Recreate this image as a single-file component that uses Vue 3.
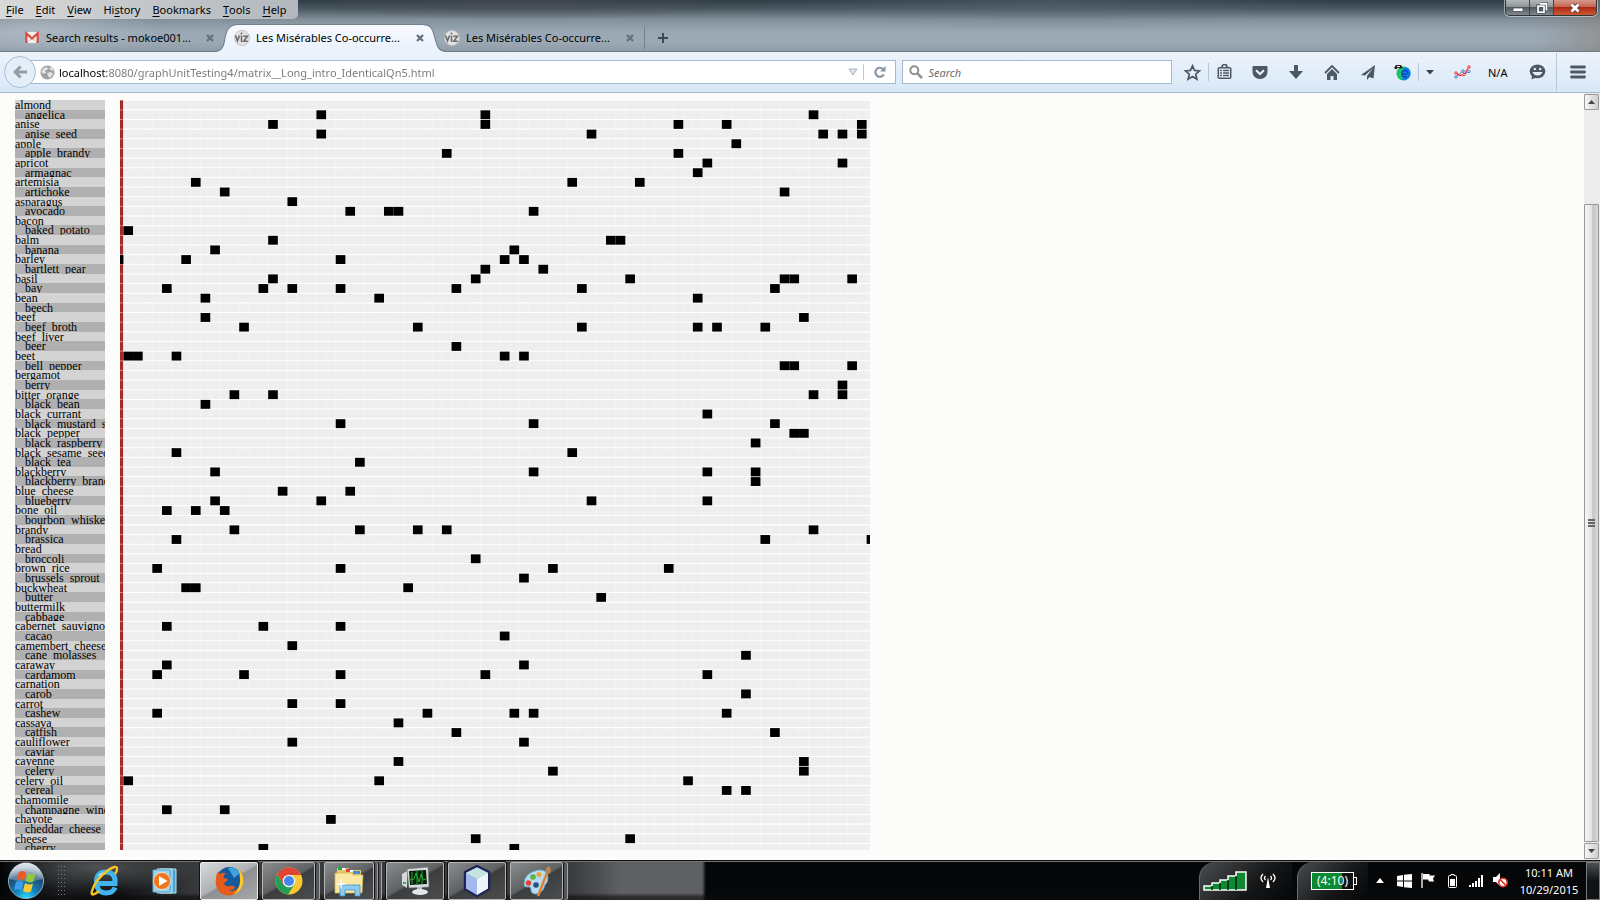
<script setup>
const menus = ['File', 'Edit', 'View', 'History', 'Bookmarks', 'Tools', 'Help'].map((name) => {
  const at = name === 'History' ? 2 : 0
  return { name, before: name.slice(0, at), key: name[at], after: name.slice(at + 1) }
})

const tabs = [
  { id: 1, title: 'Search results - mokoe001...', icon: 'mail', active: false },
  { id: 2, title: 'Les Misérables Co-occurre...', icon: 'viz', active: true },
  { id: 3, title: 'Les Misérables Co-occurre...', icon: 'viz', active: false },
]

const labels = (
  'almond angelica anise anise_seed apple apple_brandy apricot armagnac artemisia artichoke asparagus avocado ' +
  'bacon baked_potato balm banana barley bartlett_pear basil bay bean beech beef beef_broth beef_liver beer beet ' +
  'bell_pepper bergamot berry bitter_orange black_bean black_currant black_mustard_seed_oil black_pepper ' +
  'black_raspberry black_sesame_seed black_tea blackberry blackberry_brandy blue_cheese blueberry bone_oil ' +
  'bourbon_whiskey brandy brassica bread broccoli brown_rice brussels_sprout buckwheat butter buttermilk cabbage ' +
  'cabernet_sauvignon_wine cacao camembert_cheese cane_molasses caraway cardamom carnation carob carrot cashew ' +
  'cassava catfish cauliflower caviar cayenne celery celery_oil cereal chamomile champagne_wine chayote ' +
  'cheddar_cheese cheese cherry'
).split(' ')

const links = {
  1: [20, 37, 71], 2: [15, 37, 57, 62, 76], 3: [20, 48, 72, 74, 76], 4: [63], 5: [33, 57], 6: [60, 74], 7: [59],
  8: [7, 46, 53], 9: [10, 68], 10: [17], 11: [23, 27, 28, 42], 13: [0], 14: [15, 50, 51], 15: [9, 40],
  16: [-1, 6, 22, 39, 41], 17: [37, 43], 18: [15, 36, 52, 68, 69, 75], 19: [4, 14, 17, 22, 34, 47, 67],
  20: [8, 26, 59], 22: [8, 70], 23: [12, 30, 47, 59, 61, 66], 25: [34], 26: [0, 1, 5, 39, 41], 27: [68, 69, 75],
  29: [74], 30: [11, 15, 71, 74], 31: [8], 32: [60], 33: [22, 42, 67], 34: [69, 70], 35: [65], 36: [5, 46],
  37: [24], 38: [9, 42, 60, 65], 39: [65], 40: [16, 23], 41: [9, 20, 48, 60], 42: [4, 7, 10],
  44: [11, 24, 30, 33, 71], 45: [5, 66, 77], 47: [36], 48: [3, 22, 44, 56], 49: [41], 50: [6, 7, 29], 51: [49],
  54: [4, 14, 22], 55: [39], 56: [17], 57: [64], 58: [4, 41], 59: [3, 12, 22, 37, 60], 61: [64], 62: [17, 22],
  63: [3, 31, 40, 42, 62], 64: [28], 65: [34, 67], 66: [17, 41], 68: [28, 70], 69: [44, 70], 70: [0, 26, 58],
  71: [62, 64], 73: [4, 10], 74: [21], 76: [36, 52], 77: [14, 40],
}
const cells = Object.entries(links).flatMap(([row, cols]) => cols.map((col) => ({ row: Number(row), col: col + 1 })))
const lines = Array.from({ length: 79 }, (_, i) => i)
const dots = Array.from({ length: 24 }, (_, i) => ({ x: 1 + (i % 3) * 3, y: 1 + Math.floor(i / 3) * 4 }))
</script>

<template>
  <div class="screen">
    <header class="frame">
      <div class="title-row">
        <nav class="menu" aria-label="Menu bar">
          <button v-for="m in menus" :key="m.name" type="button">{{ m.before }}<u>{{ m.key }}</u>{{ m.after }}</button>
        </nav>
        <div class="window-buttons">
          <button type="button" class="min" aria-label="Minimize">
            <svg width="12" height="12" viewBox="0 0 12 12"><rect x="1" y="6" width="10" height="3.500" rx=".5" fill="#fff" stroke="#444b57" stroke-width=".8" /></svg>
          </button>
          <button type="button" class="max" aria-label="Restore">
            <svg width="12" height="12" viewBox="0 0 12 12"><g fill="none" stroke="#444b57" stroke-width="3.200"><path d="M4.500 2h6v6" /><rect x="2" y="4" width="6" height="6" /></g><g fill="none" stroke="#fff" stroke-width="1.700"><path d="M4 1.800h6.500v6.500" /><rect x="2" y="4.200" width="6" height="6" /></g></svg>
          </button>
          <button type="button" class="close" aria-label="Close window">
            <svg width="14" height="12" viewBox="0 0 14 12"><path d="M3.500 2.500l7 7m0-7l-7 7" stroke="#4f3b45" stroke-width="4.500" /><path d="M3.500 2.500l7 7m0-7l-7 7" stroke="#fff" stroke-width="2.800" /></svg>
          </button>
        </div>
      </div>
      <div class="tab-row">
        <div v-for="t in tabs" :key="t.id" class="tab" :class="{ active: t.active }">
          <svg v-if="t.active" class="tab-shape" viewBox="0 0 230 28" preserveAspectRatio="none">
            <defs><linearGradient id="tabFill" x2="0" y2="1"><stop offset="0" stop-color="#f7faff" /><stop offset="1" stop-color="#e9f1fb" /></linearGradient></defs>
            <path d="M0 28C13 28 10 17 13 9 15 3 18 1 24 1H205c7 0 9 3 11 9 3 9 2 18 14 18z" fill="url(#tabFill)" />
            <path d="M0 27.500C13 27.500 10 17 13 9 15 3 18 .5 24 .5H205c7 0 9 3 11 9 3 9 2 18 14 18" fill="none" stroke="#6f7f90" />
          </svg>
          <button type="button" class="tab-title">
            <svg v-if="t.icon === 'mail'" width="15" height="15" viewBox="0 0 15 15">
              <rect x="1" y="2" width="13" height="11" fill="#f3f1f0" /><path d="M2 13l5.500-5 5.500 5" fill="none" stroke="#d0cdcb" /><path d="M1.800 13V3.200l5.700 5.300 5.700-5.300V13" fill="none" stroke="#d8483c" stroke-width="2.200" />
            </svg>
            <svg v-else width="16" height="16" viewBox="0 0 16 16">
              <circle cx="8" cy="8" r="7.500" fill="#e4e4e4" stroke="#c2c2c2" />
              <g fill="none" stroke="#6c6c6c" stroke-width="1.600"><path d="M1.500 5.500l2 5.500 2-5.500M7.500 5.500V12M9.200 6.300h4.200l-3.600 4.900h4" /></g><circle cx="7.500" cy="3.400" r="1" fill="#6c6c6c" />
            </svg>
            <span>{{ t.title }}</span>
          </button>
          <button type="button" class="tab-close" aria-label="Close tab">
            <svg width="8" height="8" viewBox="0 0 8 8"><path d="M1 1l6 6m0-6L1 7" stroke="#63717f" stroke-width="2.300" /></svg>
          </button>
        </div>
        <button type="button" class="new-tab" aria-label="New tab">
          <svg width="10" height="10" viewBox="0 0 10 10"><path d="M5 0v10M0 5h10" stroke="#3c4852" stroke-width="2" /></svg>
        </button>
      </div>
    </header>

    <div class="toolbar">
      <button type="button" class="back" aria-label="Back">
        <svg width="14" height="14" viewBox="0 0 14 14"><path d="M7.500 1.500L2.200 7l5.300 5.500M2.500 7H14" fill="none" stroke="#949ba3" stroke-width="3" /></svg>
      </button>
      <div class="url-box">
        <svg width="15" height="15" viewBox="0 0 15 15"><circle cx="7.500" cy="7.500" r="7" fill="#a0a0a0" /><path d="M1 7l3-4 3-1 1 2-3 2 1 2-2 1zM9 3l3-1 2 4-3-1zM7 8l4-1 2 2-3 4-2-2z" fill="#e4e4e4" /></svg>
        <input class="url" type="text" aria-label="Address" value="localhost:8080/graphUnitTesting4/matrix__Long_intro_IdenticalQn5.html" />
        <button type="button" class="drop" aria-label="Show history">
          <svg width="10" height="8" viewBox="0 0 10 8"><path d="M1 1h8L5 7z" fill="#dfe5ec" stroke="#a6b1bd" /></svg>
        </button>
        <button type="button" class="reload" aria-label="Reload">
          <svg width="12" height="12" viewBox="0 0 12 12"><path d="M9 3A4.500 4.500 0 1 0 9.800 8.500" fill="none" stroke="#8694a3" stroke-width="2.200" /><path d="M11.500 0v5.500H6z" fill="#8694a3" /></svg>
        </button>
      </div>
      <div class="search-box">
        <svg width="14" height="14" viewBox="0 0 14 14"><circle cx="5.300" cy="5.300" r="4" fill="none" stroke="#8f8f8f" stroke-width="2" /><path d="M8.300 8.300l4.700 4.700" stroke="#8f8f8f" stroke-width="2.600" /></svg>
        <input type="text" aria-label="Search" placeholder="Search" />
      </div>
      <div class="tools">
        <button type="button" class="t-star" aria-label="Bookmark this page"><svg width="17" height="17" viewBox="0 0 17 17"><path d="M8.500 1.800l2 4.600 5 .5-3.800 3.300 1.200 5-4.400-2.700-4.400 2.700 1.200-5L1.500 6.900l5-.5z" fill="none" stroke="#4c5864" stroke-width="1.700" /></svg></button>
        <i class="sep"></i>
        <button type="button" class="t-list" aria-label="Bookmarks"><svg width="15" height="16" viewBox="0 0 15 16"><path d="M5 3a2.500 2.500 0 0 1 5 0" fill="none" stroke="#4c5864" stroke-width="1.700" /><rect x="1.300" y="3.800" width="12.400" height="10.400" rx="1" fill="#eef4fb" stroke="#4c5864" stroke-width="1.600" /><path d="M3 6.500h2M6 6.500h6M3 9h2M6 9h6M3 11.500h2M6 11.500h6" stroke="#4c5864" stroke-width="1.400" /></svg></button>
        <button type="button" class="t-pocket" aria-label="Pocket"><svg width="16" height="15" viewBox="0 0 16 15"><path d="M1.500 1h13q1 0 1 1v5a7.500 7 0 0 1-15 0V2q0-1 1-1z" fill="#4c5864" /><path d="M4 5.200L8 9l4-3.800" fill="none" stroke="#eaf2fb" stroke-width="2" /></svg></button>
        <button type="button" class="t-down" aria-label="Downloads"><svg width="14" height="15" viewBox="0 0 14 15"><path d="M5 0h4v6h5l-7 8-7-8h5z" fill="#4c5864" /></svg></button>
        <button type="button" class="t-home" aria-label="Home"><svg width="16" height="15" viewBox="0 0 16 15"><path d="M1 8l7-7 7 7" fill="none" stroke="#4c5864" stroke-width="1.800" /><path d="M8 4l5 5v6H9.500v-4h-3v4H3V9z" fill="#4c5864" /></svg></button>
        <button type="button" class="t-send" aria-label="Share"><svg width="15" height="15" viewBox="0 0 15 15"><path d="M14 0L0 10l4 .5L12 3 6 11v4l2.500-3 4 1.500z" fill="#4c5864" /></svg></button>
        <button type="button" class="t-globe" aria-label="Proxy">
          <svg width="17" height="17" viewBox="0 0 17 17"><circle cx="9.500" cy="9.500" r="7" fill="#14c766" /><path d="M9 4q6-2 7.500 4 .5 6-5 8-4 1-3-3l6-1-5-1q-3-3 0-4 4-1 4 2l-2 1q0-1-1-1" fill="#1177ee" /><path d="M12.500 10.500H8.200q-1-4 2.300-4 4 0 3 3.500M8 11q1 3 5 1.500" fill="none" stroke="#0a3fbf" stroke-width="1.300" /><path d="M0 4l2-3h5l2 3-3 .500-2-1-2 2z" fill="#2b1a17" /><path d="M3 2.500h3" stroke="#fff" /></svg>
        </button>
        <i class="sep"></i>
        <button type="button" class="t-caret" aria-label="More"><svg width="8" height="5" viewBox="0 0 8 5"><path d="M0 0h8L4 4.500z" fill="#39424b" /></svg></button>
        <button type="button" class="t-graph" aria-label="Statistics"><svg width="17" height="14" viewBox="0 0 17 14"><path d="M2 12l7-6 1 3.500 5-3" fill="none" stroke="#4a78d0" /><path d="M2 8l4 2.500 4-1 5-7.500" fill="none" stroke="#ee2a2a" stroke-width="1.200" /><g fill="#fff"><circle cx="2" cy="8" r="1.200" stroke="#ee2a2a" /><circle cx="15" cy="2" r="1.200" stroke="#ee2a2a" /><circle cx="2" cy="12" r="1.200" stroke="#4a78d0" /><circle cx="9" cy="6" r="1.200" stroke="#4a78d0" /><circle cx="15" cy="6.500" r="1.200" stroke="#4a78d0" /><circle cx="10" cy="9.500" r="1.200" stroke="#ee2a2a" /></g></svg></button>
        <span class="na">N/A</span>
        <button type="button" class="t-chat" aria-label="Chat"><svg width="17" height="16" viewBox="0 0 17 16"><ellipse cx="8.500" cy="7.300" rx="7.800" ry="6.900" fill="#4c5864" /><path d="M3 11l-.5 4.500L8 13z" fill="#4c5864" /><circle cx="5.800" cy="5" r="1.200" fill="#e5effa" /><circle cx="11.200" cy="5" r="1.200" fill="#e5effa" /><path d="M3.500 8h10q-1.500 3.500-5 3.500T3.500 8z" fill="#e5effa" /></svg></button>
        <i class="sep tall"></i>
        <button type="button" class="t-menu" aria-label="Open menu"><svg width="16" height="14" viewBox="0 0 16 14"><path d="M1.500 2h13M1.500 7h13M1.500 12h13" stroke="#4c5864" stroke-width="2.800" stroke-linecap="round" /></svg></button>
      </div>
    </div>

    <main class="page">
      <div class="viewport">
        <div class="label-box">
          <ul class="labels">
            <li v-for="l in labels" :key="l">{{ l }}</li>
          </ul>
        </div>
        <svg class="matrix" viewBox="0.65 -0.02 77.7 77.7" role="img" aria-label="Ingredient matrix">
          <rect x="0" y="-1" width="80" height="80" fill="#eee" />
          <g stroke="#fff">
            <path v-for="n in lines" :key="'v' + n" :d="`M${n} -1V80`" stroke-width=".08" stroke-opacity=".4" />
            <path v-for="n in lines" :key="'h' + n" :d="`M0 ${n}H80`" stroke-width=".11" />
          </g>
          <rect x="0" y="-1" width=".97" height="80" fill="#a52a2a" />
          <path v-for="n in lines" :key="'r' + n" :d="`M0 ${n}H.97`" stroke="#fff" stroke-width=".11" stroke-opacity=".4" />
          <rect v-for="c in cells" :key="c.row + '-' + c.col" :x="c.col" :y="c.row + 0.05" width="1" height=".92" />
        </svg>
      </div>
      <div class="scrollbar">
        <button type="button" aria-label="Scroll up"><svg width="7" height="4" viewBox="0 0 7 4"><path d="M0 4L3.500 0 7 4z" fill="#444" /></svg></button>
        <div class="track"><div class="thumb"><i></i><i></i><i></i></div></div>
        <button type="button" aria-label="Scroll down"><svg width="7" height="4" viewBox="0 0 7 4"><path d="M0 0h7L3.500 4z" fill="#444" /></svg></button>
      </div>
    </main>

    <footer class="taskbar">
      <button type="button" class="start" aria-label="Start">
        <svg width="38" height="38" viewBox="0 0 36 38" preserveAspectRatio="xMidYMid meet">
          <defs>
            <radialGradient id="orb" cx=".5" cy="1" r=".9"><stop offset="0" stop-color="#2ee2ff" /><stop offset=".35" stop-color="#1184c0" /><stop offset=".75" stop-color="#1d4a70" /><stop offset="1" stop-color="#7f9fb4" /></radialGradient>
            <linearGradient id="shine" x2="0" y2="1"><stop offset="0" stop-color="#fff" stop-opacity=".75" /><stop offset="1" stop-color="#fff" stop-opacity=".2" /></linearGradient>
          </defs>
          <circle cx="18" cy="19" r="17.500" fill="url(#orb)" stroke="#8fb3c8" /><path d="M1.500 17a16.500 16.500 0 0 1 33 0q-16 5-33 0z" fill="url(#shine)" />
          <path d="M11 10q4-2 7 .5l-2 8q-3-2-7.500-.5z" fill="#ef5a24" /><path d="M19.500 11q4 2.500 8 .5l-2 8q-4 2-8-.5z" fill="#93c83e" /><path d="M8 20q4-2 7.500.5l-2 8q-3.500-2-7.500-.5z" fill="#3d9fe8" /><path d="M17 21q4 2.500 8 .5l-2 8q-4 2-8-.5z" fill="#fdc930" />
        </svg>
      </button>
      <svg class="grip" width="8" height="32" viewBox="0 0 8 32"><rect v-for="(d, i) in dots" :key="i" :x="d.x - 1" :y="d.y" width="1" height="1" fill="#77797b" /></svg>
      <button type="button" class="pin" aria-label="Internet Explorer">
        <svg width="30" height="32" viewBox="0 0 30 32"><path d="M8.500 18.500H25Q26 7 16 7T6.500 17.500 16 28q7 0 9-5.500" fill="none" stroke="#42b4f0" stroke-width="5" /><path d="M9 11q3-3 7-3" fill="none" stroke="#c1ebff" stroke-width="2" /><path d="M9 26Q0 33 2 26 5 15 17 6 27-1 27 4q0 3-2 5" fill="none" stroke="#f7c422" stroke-width="2.400" /></svg>
      </button>
      <button type="button" class="pin" aria-label="Media Player">
        <svg width="26" height="26" viewBox="0 0 26 26"><path d="M8 1h16v24H8z" fill="#4ba3d3" stroke="#b7e2f6" /><path d="M5 1h15v24H5z" fill="#76bfe2" stroke="#c7e8f7" /><path d="M1 2h17v22H1z" fill="#9ed3ec" stroke="#5ba7cc" /><circle cx="10" cy="13" r="8.500" fill="#f0761c" stroke="#fff0e0" stroke-width=".7" /><path d="M7 8l8.500 5L7 18z" fill="#fff" /></svg>
      </button>
      <button type="button" class="task current" aria-label="Firefox">
        <svg width="30" height="32" viewBox="0 0 30 32"><circle cx="15.500" cy="15" r="13" fill="#155a9c" /><path d="M14 3q8-2 12 5l-6 5z" fill="#3fa2da" /><path d="M25 4q6 7 3.500 16Q25 30 15 30.500 4 30 2 20 1 12 4 6l2 3q2-2 6-1-3 2-2 5l4 1q0 2-4 4 1 4 6 3 4-1 5 1-2 4-7 3 7 3 11-4 3-7 0-17z" fill="#e55b1c" /><path d="M24 3q7 8 5 16-2 8-10 11 8-7 7-16 0-6-2-11z" fill="#fcca2f" /></svg>
      </button>
      <button type="button" class="task stack" aria-label="Chrome">
        <svg width="30" height="30" viewBox="0 0 28 30"><circle cx="14" cy="15" r="13.500" fill="#fbc832" /><path d="M2.300 8.200A13.500 13.500 0 0 1 25.700 8.200L26 9H14L8 18z" fill="#e04434" /><path d="M2.300 8.200A13.500 13.500 0 0 0 13 28.500L19.500 18.500 14 21 8 18z" fill="#249d58" /><circle cx="14" cy="15" r="6.300" fill="#f2f2f2" /><circle cx="14" cy="15" r="5" fill="#4485ee" /></svg>
      </button>
      <button type="button" class="task stack double" aria-label="Explorer">
        <svg width="34" height="32" viewBox="0 0 32 32"><path d="M4 3h11l2 2h11v22H3z" fill="#e8c669" /><path d="M5 2h4v3H5z" fill="#18a94a" /><path d="M13 4h4v3h-4z" fill="#d64b37" /><path d="M20 6h7v3h-7z" fill="#3a8fd9" /><path d="M9 3h3v2H9zM17 5h3v2h-3z" fill="#fff" /><path d="M2 8h16l2 2h10l-1 18H2z" fill="#fae9a4" stroke="#d6b252" stroke-width=".7" /><path d="M7 31V20h20v11h-5v-6H12v6z" fill="#8ecbee" stroke="#3d93c9" stroke-width=".8" /><path d="M8 13l1 5 5 1-5 1-1 5-1-5-5-1 5-1z" fill="#fff" /></svg>
      </button>
      <button type="button" class="task" aria-label="Task Manager">
        <svg width="30" height="30" viewBox="0 0 30 30"><path d="M2 8l5-3v17l-5-3z" fill="#d4d7d9" /><path d="M3 16h3v2H3z" fill="#33b84a" /><path d="M7 3l21-2 1 20-20 1z" fill="#d9dcde" stroke="#777" stroke-width=".6" /><path d="M9 5l17-1 1 14-17 1z" fill="#062009" /><path d="M10 14l4-1 2-6 3 9 2-8 2 6 3-1M12 6v12M17 5v13M22 5v13" stroke="#29b53a" fill="none" stroke-width=".9" /><path d="M17 21l5 0v3h-5z" fill="#bbb" /><ellipse cx="20" cy="26" rx="8" ry="3" fill="#e4e6e8" /></svg>
      </button>
      <button type="button" class="task" aria-label="NetBeans">
        <svg width="32" height="34" viewBox="0 0 30 34"><path d="M15 2l12 6v17l-12 7-12-7V8z" fill="#9fbbe6" stroke="#1d2357" stroke-width="2.400" stroke-linejoin="round" /><path d="M15 3.500L26 9l-11 6L4 9z" fill="#c5e3dd" /><path d="M15 15l11-6v15.500L15 31z" fill="#eef4fb" /><path d="M4 9l11 6v16L4 24.500z" fill="#a3b9ec" /></svg>
      </button>
      <button type="button" class="task stack" aria-label="Paint">
        <svg width="30" height="32" viewBox="0 0 30 32"><path d="M2 19Q2 8 16 5q10-1 10 8 0 4-3 7-2 8-9 9-5 0-5-4t-4-3q-3 0-3-3z" fill="#b7dcf0" stroke="#6aa6c8" /><circle cx="6.500" cy="18" r="2.800" fill="#e34234" /><circle cx="11" cy="12" r="2.800" fill="#58b54a" /><circle cx="17" cy="9.500" r="2.500" fill="#f0a52c" /><circle cx="14" cy="20" r="2.800" fill="#254f78" /><path d="M25 8L16 31" stroke="#dd8433" stroke-width="2.500" /><path d="M24 9q-2-6 3-8 4 4 0 8z" fill="#b98455" /></svg>
      </button>
      <div class="spacer"></div>
      <div class="panel wifi">
        <svg width="44" height="20" viewBox="0 0 44 20"><path d="M1 19v-4h8v-3h8V9h8V5h8V1h10v18z" fill="#0d8a32" stroke="#fff" stroke-width="1.500" /><path d="M9 15v4M17 12v7M25 9v10M33 5v14" stroke="#04250e" stroke-width="1.500" /></svg>
        <svg width="16" height="16" viewBox="0 0 16 16"><g fill="none" stroke="#fff" stroke-width="1.300"><path d="M3 1Q-1 5 3 9M5.500 3q-2 2 0 4M13 1q4 4 0 8M10.500 3q2 2 0 4" /></g><path d="M8 4l2 11H6z" fill="#fff" /></svg>
      </div>
      <div class="panel power">
        <div class="battery">(4:10)</div>
      </div>
      <div class="tray">
        <button type="button" aria-label="Show hidden icons"><svg width="8" height="5" viewBox="0 0 8 5"><path d="M0 5l4-5 4 5z" fill="#fff" /></svg></button>
        <button type="button" aria-label="Windows"><svg width="15" height="14" viewBox="0 0 15 14"><path d="M0 2l6-1v5.500H0zM7 .8L15 0v6.500H7zM0 7.500h6V13l-6-1zM7 7.500h8V14l-8-.8z" fill="#fff" /></svg></button>
        <button type="button" aria-label="Action Center"><svg width="15" height="15" viewBox="0 0 15 15"><path d="M1 0v15" stroke="#fff" stroke-width="1.300" /><path d="M2 1h7l-1 1.500h6l-2 3 1 3H8l-1-2H2z" fill="#fff" /></svg></button>
        <button type="button" aria-label="Battery"><svg width="9" height="14" viewBox="0 0 9 14"><path d="M3 1.500V.5h3v1h1.500q1 0 1 1v10q0 1-1 1h-6q-1 0-1-1v-10q0-1 1-1z" fill="none" stroke="#fff" /><rect x="2" y="5" width="5" height="7" fill="#fff" /></svg></button>
        <button type="button" aria-label="Network"><svg width="15" height="12" viewBox="0 0 15 12"><path d="M1 12v-2M4 12V8M7 12V6M10 12V3M13 12V0" stroke="#fff" stroke-width="2" /></svg></button>
        <button type="button" aria-label="Volume"><svg width="15" height="15" viewBox="0 0 15 15"><path d="M0 4h3l4-4v13L3 9H0z" fill="#fff" /><circle cx="10" cy="9.500" r="4.200" fill="#fff" stroke="#e02b22" stroke-width="1.600" /><path d="M7 6.500l6 6" stroke="#e02b22" stroke-width="1.600" /></svg></button>
      </div>
      <div class="clock"><span>10:11 AM</span><span>10/29/2015</span></div>
      <button type="button" class="show-desktop" aria-label="Show desktop"></button>
    </footer>
  </div>
</template>

<style>
html,
body,
#app {
  height: 100%;
  margin: 0;
}
</style>

<style scoped>
.screen {
  display: flex;
  flex-direction: column;
  height: 100%;
  overflow: hidden;
  font: 11px 'Noto Sans', 'Open Sans', sans-serif;
  color: #000;
}
button {
  display: flex;
  align-items: center;
  justify-content: center;
  padding: 0;
  border: 0;
  background: none;
  font: inherit;
  color: inherit;
}
svg {
  flex: none;
}
.frame {
  flex: none;
  background:
    radial-gradient(ellipse 120px 30px at 40px 28px, rgba(190, 198, 208, 0.5), transparent),
    linear-gradient(90deg, transparent 96%, rgba(140, 130, 125, 0.55)),
    radial-gradient(ellipse 260px 20px at 520px 0, rgba(75, 75, 82, 0.6), transparent),
    radial-gradient(ellipse 300px 30px at 1050px 0, rgba(100, 115, 125, 0.4), transparent),
    linear-gradient(#2e3c45 0, #4b5962 9px, #84929c 20px, #9aa8b5 32px, #9ba9b5 42px, #8f9ba6 52px);
}
.title-row {
  display: flex;
  justify-content: space-between;
  height: 24px;
}
.menu {
  display: flex;
  align-items: center;
  gap: 12px;
  width: 292px;
  height: 19px;
  padding-left: 6px;
  border-radius: 0 0 5px 0;
  background: linear-gradient(90deg, #d8d8d8, #c3c7ca 50%, #b2b8bd);
}
.menu button {
  white-space: nowrap;
}
.menu u {
  text-underline-offset: 2px;
}
.window-buttons {
  display: flex;
  height: 15px;
  margin-right: 3px;
  border: 1px solid #2b333b;
  border-top: 0;
  border-radius: 0 0 5px 5px;
  box-shadow: 0 0 0 1px rgba(220, 230, 238, 0.6);
  overflow: hidden;
}
.window-buttons button {
  width: 24px;
  border-right: 1px solid #3d454c;
  background: linear-gradient(#b5b8ba, #8e9396 45%, #545b60 50%, #83888c);
}
.window-buttons .close {
  width: 42px;
  border-right: 0;
  background: linear-gradient(#d79a8c, #c66450 45%, #ad2813 50%, #cc5a35);
}
.tab-row {
  display: flex;
  height: 27px;
  padding-left: 14px;
  border-bottom: 1px solid #6d7b89;
}
.tab {
  position: relative;
  display: flex;
  align-items: center;
  box-sizing: border-box;
  width: 210px;
  padding-left: 10px;
}
.tab-title {
  position: relative;
  gap: 6px;
  white-space: nowrap;
}
.tab-title svg {
  width: 16px;
}
.tab-close {
  position: relative;
  width: 14px;
  height: 14px;
  margin-left: auto;
  margin-right: 7px;
}
.tab-shape {
  position: absolute;
  left: -11px;
  top: 0;
  width: 235px;
  height: 28px;
}
.new-tab {
  width: 37px;
  height: 22px;
  margin-top: 3px;
  border-left: 1px solid #75828e;
}
.toolbar {
  display: flex;
  flex: none;
  align-items: center;
  height: 40px;
  border-bottom: 1px solid #a5bad1;
  background: linear-gradient(#edf3fb, #e0ecf9 60%, #d9e7f6);
}
.back {
  position: relative;
  z-index: 1;
  width: 32px;
  height: 32px;
  margin-left: 4px;
  border: 1px solid #a8bdd6;
  border-radius: 50%;
  background: #e4eef9;
}
.url-box,
.search-box {
  display: flex;
  align-items: center;
  box-sizing: border-box;
  height: 24px;
  border: 1px solid #a3b8d2;
  background: #fff;
}
.url-box {
  flex: 873;
  margin-left: -10px;
  padding-left: 13px;
}
input {
  flex: 1;
  min-width: 0;
  height: 20px;
  padding: 0;
  border: 0;
  outline: 0;
  background: none;
  font: inherit;
}
.url {
  margin-left: 4px;
  background: linear-gradient(90deg, #000 48px, #777 48px);
  background-clip: text;
  color: transparent;
}
.drop {
  width: 22px;
  height: 16px;
  border-right: 1px solid #c5c9cf;
}
.reload {
  width: 31px;
  height: 20px;
}
.search-box {
  flex: 267;
  margin-left: 6px;
  padding-left: 6px;
  gap: 5px;
}
.search-box input::placeholder {
  color: #6d6d6d;
  font-style: italic;
}
.tools {
  display: flex;
  flex: none;
  align-items: center;
  width: 428px;
}
.tools button {
  flex: none;
  width: 36px;
  height: 24px;
}
.tools .t-star {
  width: 31px;
  margin-left: 5px;
}
.tools .t-list {
  width: 30px;
  margin-right: 3px;
}
.tools .t-globe {
  width: 32px;
}
.tools .t-caret {
  width: 22px;
}
.tools .t-graph {
  width: 34px;
  margin-left: 4px;
}
.na {
  margin-left: 9px;
  width: 22px;
}
.tools .t-chat {
  width: 38px;
  margin-left: 8px;
}
.tools .t-menu {
  width: 42px;
}
.sep {
  width: 1px;
  height: 18px;
  background: #b9c6d6;
}
.sep.tall {
  height: 38px;
}
.page {
  display: flex;
  flex: 1;
  min-height: 0;
  background: #fcfcfa;
}
.viewport {
  display: flex;
  flex: 1;
  align-items: flex-start;
  gap: 15px;
  padding: 7px 0 0 15px;
}
.label-box {
  width: 90px;
  height: 750px;
  overflow: hidden;
}
.labels {
  display: grid;
  grid-auto-rows: 1fr;
  height: 753px;
  margin: 0;
  padding: 0;
  list-style: none;
  font: 12px/10px 'Liberation Serif', 'Times New Roman', serif;
}
.labels li {
  position: relative;
  min-height: 0;
  background: #d3d3d3;
  white-space: nowrap;
}
.labels li:nth-child(even) {
  padding-left: 10px;
  background: #b0b0b0;
}
.matrix {
  width: 750px;
  height: 750px;
}
.scrollbar {
  display: flex;
  flex-direction: column;
  gap: 1px;
  box-sizing: border-box;
  width: 16px;
  padding: 1px 1px 1px 0;
  background: #ececec;
}
.scrollbar button {
  flex: none;
  height: 16px;
  border: 1px solid #9b9b9b;
  border-radius: 1px;
  background: linear-gradient(90deg, #f5f5f5, #cfcfd2);
}
.track {
  display: flex;
  flex: 1;
  flex-direction: column;
  justify-content: flex-end;
}
.thumb {
  display: flex;
  flex-direction: column;
  align-items: center;
  justify-content: center;
  gap: 1px;
  height: 87%;
  border: 1px solid #979797;
  border-radius: 1px;
  background: linear-gradient(90deg, #f6f6f6, #e3e3e6 50%, #c4c5c9 60%, #d8d8da);
}
.thumb i {
  width: 7px;
  height: 2px;
  background: #666;
}
.taskbar {
  display: flex;
  flex: none;
  align-items: center;
  box-sizing: border-box;
  height: 40px;
  border-top: 1px solid #111;
  box-shadow: inset 0 1px #6f7275;
  background:
    radial-gradient(ellipse 100px 26px at 100px 6px, rgba(95, 97, 100, 0.8), transparent),
    linear-gradient(transparent 32px, rgba(10, 10, 12, 0.6) 36px),
    linear-gradient(90deg, #020405 0, #1a1b1c 60px, #101112 120px, #3a3b3d 200px, #3a3b3d 570px, #4e4f51 600px, #5f6062 620px, #5f6062 702px, #050708 706px);
  color: #fff;
}
.start {
  width: 38px;
  margin-left: 7px;
}
.grip {
  margin-left: 13px;
}
.pin {
  width: 60px;
}
.grip + .pin {
  margin-left: 9px;
}
.pin + .task {
  margin-left: 5px;
}
.task {
  box-sizing: border-box;
  width: 58px;
  height: 38px;
  margin-right: 4px;
  border: 1px solid #b3b5b7;
  border-radius: 2px;
  box-shadow: 0 0 0 1px #111;
  background: linear-gradient(150deg, #8a8c8e, #5e6062 48%, #3b3d3f 52%, #4b4d4f);
}
.task.stack {
  width: 53px;
  margin-right: 9px;
  box-shadow: 1px 0 #111, 4px 0 #55575a, 5px 0 #a0a2a4;
}
.task.double {
  width: 50px;
  margin-right: 12px;
  box-shadow: 1px 0 #111, 3px 0 #55575a, 4px 0 #a0a2a4, 5px 0 #111, 7px 0 #55575a, 8px 0 #a0a2a4;
}
.task.current {
  background: linear-gradient(150deg, #d8d9da, #aeb0b2 48%, #8d8f91 52%, #a5a7a9);
  border-color: #e9eaeb;
}
.spacer {
  flex: 1;
}
.panel {
  display: flex;
  align-items: center;
  box-sizing: border-box;
  height: 38px;
  border-top-left-radius: 16px;
  border-left: 1px solid #6a6c6e;
  background: linear-gradient(135deg, #4a4c4e, #141617 60%, #050708);
}
.wifi {
  gap: 13px;
  width: 93px;
  margin-right: 5px;
  padding-left: 3px;
}
.power {
  width: 71px;
  padding-left: 13px;
}
.battery {
  position: relative;
  box-sizing: border-box;
  width: 43px;
  height: 18px;
  border: 1px solid #fff;
  background: linear-gradient(90deg, #0b8a33 72%, #101214 72%);
  font-size: 12px;
  line-height: 16px;
  text-align: center;
}
.battery::after {
  content: '';
  position: absolute;
  top: 4px;
  right: -4px;
  width: 3px;
  height: 8px;
  border: 1px solid #fff;
  border-left: 0;
  box-sizing: border-box;
}
.tray {
  display: flex;
  align-items: center;
}
.tray button {
  width: 24px;
}
.clock {
  display: flex;
  flex-direction: column;
  align-items: center;
  width: 74px;
  line-height: 17px;
}
.show-desktop {
  box-sizing: border-box;
  width: 14px;
  height: 38px;
  border: 1px solid #777a7d;
  background: linear-gradient(#4d5053, #101214 50%);
}
</style>
